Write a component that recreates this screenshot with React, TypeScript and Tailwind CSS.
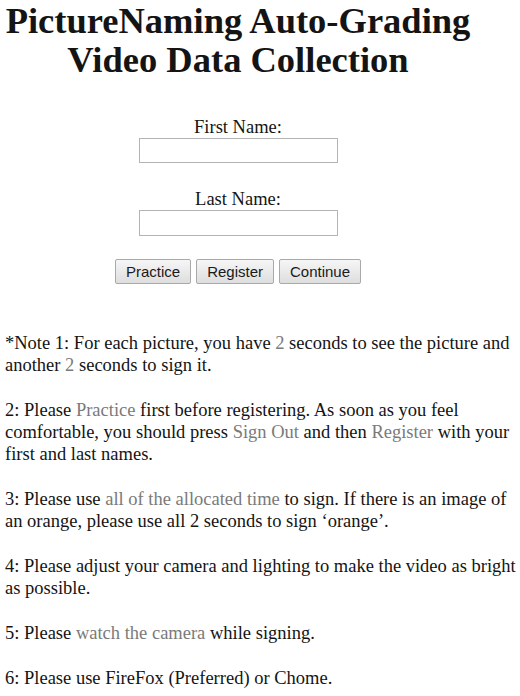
import React from "react";

const G = ({ children }: { children: React.ReactNode }) => (
  <span className="text-[#7a7a7a]">{children}</span>
);

function Btn({ label }: { label: string }) {
  return (
    <button className="h-[25px] px-[10px] border border-[#a9a9a9] rounded-[2px] bg-gradient-to-b from-[#f6f6f6] to-[#dedede] text-[15px] leading-none text-[#1a1a1a] font-['Liberation_Sans',Arial,sans-serif]">
      {label}
    </button>
  );
}

export default function App() {
  return (
    <div className="w-[520px] h-[696px] overflow-hidden bg-white text-[#141414] font-['Liberation_Serif','Times_New_Roman',serif]">
      <div className="w-[476px] flex flex-col items-center text-center">
        <h1 className="pt-[1px] text-[36.5px] leading-[39px] font-bold whitespace-nowrap">
          PictureNaming Auto-Grading
          <br />
          Video Data Collection
        </h1>
        <div className="mt-[37px] text-[18.5px] leading-[22px]">First Name:</div>
        <input className="w-[199px] h-[25px] border border-[#b4b4b4] bg-white" />
        <div className="mt-[25px] text-[18.5px] leading-[22px]">Last Name:</div>
        <input className="w-[199px] h-[26px] border border-[#b4b4b4] bg-white" />
        <div className="mt-[23px] flex gap-[5px]">
          <Btn label="Practice" />
          <Btn label="Register" />
          <Btn label="Continue" />
        </div>
      </div>
      <div className="mt-[48px] pl-[5px] text-[18.5px] leading-[22px] flex flex-col gap-[23px] whitespace-nowrap">
        <p>
          *Note 1: For each picture, you have <G>2</G> seconds to see the picture and
          <br />
          another <G>2</G> seconds to sign it.
        </p>
        <p>
          2: Please <G>Practice</G> first before registering. As soon as you feel
          <br />
          comfortable, you should press <G>Sign Out</G> and then <G>Register</G> with your
          <br />
          first and last names.
        </p>
        <p>
          3: Please use <G>all of the allocated time</G> to sign. If there is an image of
          <br />
          an orange, please use all 2 seconds to sign ‘orange’.
        </p>
        <p>
          4: Please adjust your camera and lighting to make the video as bright
          <br />
          as possible.
        </p>
        <p>
          5: Please <G>watch the camera</G> while signing.
        </p>
        <p>6: Please use FireFox (Preferred) or Chome.</p>
      </div>
    </div>
  );
}
